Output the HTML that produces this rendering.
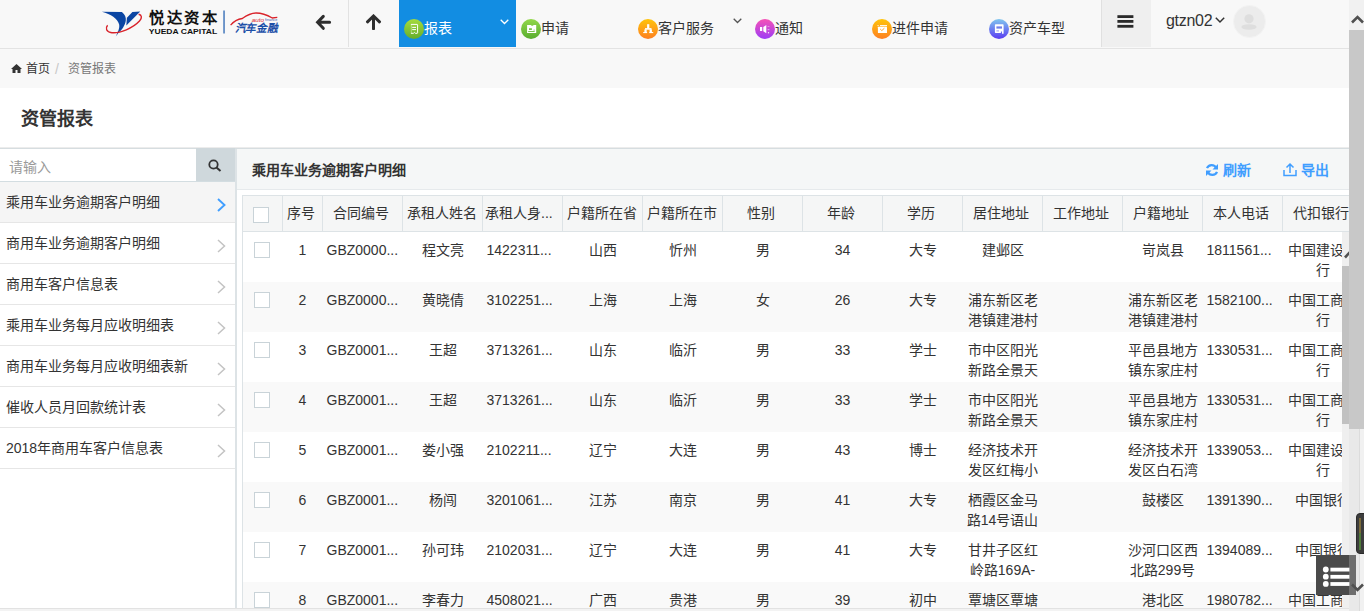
<!DOCTYPE html>
<html lang="zh-CN">
<head>
<meta charset="utf-8">
<style>
*{box-sizing:border-box;margin:0;padding:0}
html,body{width:1364px;height:611px;overflow:hidden;background:#fff}
body{font-family:"Liberation Sans",sans-serif;font-size:14px;color:#333;position:relative}
.abs{position:absolute}
/* header */
#hdr{position:absolute;left:0;top:0;width:1349px;height:49px;background:#f8f8f8;border-bottom:1px solid #e3e3e3}
.vline{position:absolute;top:0;width:1px;height:47px;background:#e2e2e2}
.menu{position:absolute;top:0;height:47px;width:117px}
.menu.act{background:#128de2}
.menu .ic{position:absolute;left:5px;top:19px;width:20px;height:20px;border-radius:50%}
.menu .tx{position:absolute;left:25px;top:18px;font-size:14px;line-height:20px;color:#333;white-space:nowrap}
.menu.act .tx{color:#fff}
.chev{position:absolute}
/* breadcrumb */
#bc{position:absolute;left:0;top:49px;width:1349px;height:39px;background:#f8f8f8;font-size:12px}
#title{position:absolute;left:21px;top:107px;font-size:18px;font-weight:bold;color:#333;line-height:24px}
#topline{position:absolute;left:0;top:147px;width:1349px;height:2px;background:linear-gradient(#ececec 0,#ececec 1px,#d6dde0 1px)}
/* sidebar */
#side{position:absolute;left:0;top:149px;width:236px;height:459px;border-right:1px solid #dde3e6;background:#fff}
#search{position:absolute;left:0;top:0;width:235px;height:33px;border-bottom:1px solid #d3dde1}
#search .ph{position:absolute;left:9px;top:8px;color:#9a9a9a;font-size:14px;line-height:20px}
#search .btn{position:absolute;left:196px;top:-1px;width:39px;height:33px;background:#cfd8dc}
.item{position:absolute;left:0;width:235px;height:41px;border-bottom:1px solid #e6e6e6;background:#fff}
.item.act{background:#f5f5f5}
.item .t{position:absolute;left:6px;top:10px;line-height:20px;font-size:14px;color:#333;white-space:nowrap}
.item svg{position:absolute;left:216.5px;top:16px}
/* panel */
#panel{position:absolute;left:236px;top:149px;width:1113px;height:459px;border-left:1px solid #dde3e6;background:#fff}
#ph{position:absolute;left:0;top:0;width:1112px;height:41px;background:#f5f7f7;border-bottom:1px solid #e6eaec}
#ph .t{position:absolute;left:15px;top:11px;font-size:14px;font-weight:bold;line-height:20px;color:#333}
.lnk{position:absolute;top:11px;line-height:20px;color:#409eff;font-weight:bold;font-size:14px}
/* table */
#tbl{position:absolute;left:5px;top:46px;width:1200px;height:413px;overflow:hidden}
table{border-collapse:collapse;table-layout:fixed}
th,td{text-align:center;font-size:14px;font-weight:normal;padding:0 4px;overflow:hidden;white-space:nowrap;text-overflow:clip}
thead th{height:36px;padding:0 8px 2px 4px;background:#f5f6f6;border:1px solid #dde3e6;border-top:1px solid #dde3e6;line-height:20px;color:#333}
tbody td{height:50px;vertical-align:top;padding-top:8px;line-height:20px;color:#333}
tbody tr:nth-child(even) td{background:#f9f9f9}
td.l{text-align:left}
tbody td:first-child{border-left:1px solid #dde3e6}
td.w{white-space:normal;text-overflow:clip}
td.w div{max-height:40px;overflow:hidden;word-break:break-all}
thead .cb{position:relative;top:4px}
tbody .cb{position:relative;left:-1px;top:2px}
.cb{display:inline-block;width:16px;height:16px;border:1px solid #c9d3d8;background:#fff;vertical-align:top}

/* scrollbars */
#isb{position:absolute;left:1342px;top:232px;width:7px;height:376px;background:#efefef}
#isb .th{position:absolute;left:0;top:34px;width:7px;height:158px;background:#c1c1c1}
#psb{position:absolute;left:1349px;top:0;width:15px;height:611px;background:linear-gradient(90deg,#e9e9e9 0,#e9e9e9 10px,#dcdcdc 10px,#dcdcdc 11px,#f1f1f1 11px)}
#psb .th{position:absolute;left:0;top:30px;width:15px;height:399px;background:#c8c8c8}
#bot{position:absolute;left:0;top:608px;width:1349px;height:3px;background:#f3f3f3;border-top:1px solid #e2e2e2}
</style>
</head>
<body>

<div id="hdr">
  <!-- logo -->
  <svg class="abs" style="left:100px;top:9px" width="182" height="30" viewBox="0 0 182 30">
    <path d="M1.9 2.8 L21.9 3.1 C25 5.5 26.2 8.5 25.8 11.5 C25.2 16 22 21 19.1 23.1 L15.8 27.6 L17.6 23.5 C19.3 20 19.6 17.5 19.1 15.3 C17.5 10 11 5 1.9 2.8 Z" fill="#0a45a3"/>
    <path d="M26.9 8.7 L32.4 3.1 L40.2 2.6 L26.3 16.4 Z" fill="#0a45a3"/>
    <path d="M7.6 16.2 C5.2 19 6 23 11.9 23.7 C20 24.5 33 19 39.5 12 C42.3 9 42 6 38.6 5.3" stroke="#d9232b" stroke-width="1.4" fill="none"/>
    <text x="48.8" y="14.3" font-size="15.3" font-weight="bold" fill="#111" textLength="68.3" lengthAdjust="spacing">悦达资本</text>
    <text x="48.8" y="24.6" font-size="7.6" font-weight="bold" fill="#111" textLength="68.3" lengthAdjust="spacingAndGlyphs">YUEDA CAPITAL</text>
    <rect x="123.1" y="1.5" width="1.9" height="23" fill="#6a93c8"/>
    <path d="M130.6 16.2 C134 12 138 10 142.3 9.5 C147 6 151 4 156.2 4 C162 4 167 6 172.3 9 L177.3 8.4" stroke="#d9232b" stroke-width="1.3" fill="none"/>
    <text x="151.7" y="12.6" font-size="4.6" font-style="italic" fill="#d9232b" textLength="12.3" lengthAdjust="spacingAndGlyphs">auto</text>
    <text x="165" y="12.4" font-size="3.4" fill="#3a63b0" textLength="12.3" lengthAdjust="spacingAndGlyphs">finance</text>
    <text x="134.7" y="23" font-size="11" font-weight="bold" font-style="italic" fill="#1b4fa8" textLength="42.6" lengthAdjust="spacingAndGlyphs">汽车金融</text>
  </svg>
  <!-- back arrow -->
  <svg class="abs" style="left:315px;top:14px" width="17" height="17" viewBox="0 0 17 17">
    <path d="M8.3 2.4 L2.6 8.3 L8.3 14.3 M3.2 8.3 L14.6 8.3" stroke="#2e2e2e" stroke-width="3" fill="none" stroke-linecap="round" stroke-linejoin="miter"/>
  </svg>
  <div class="vline" style="left:348px"></div>
  <!-- up arrow -->
  <svg class="abs" style="left:365px;top:14px" width="17" height="16" viewBox="0 0 17 16">
    <path d="M2.5 7.8 L8.5 2 L14.5 7.8 M8.5 3 L8.5 14.8" stroke="#2e2e2e" stroke-width="3" fill="none" stroke-linecap="round"/>
  </svg>

  <div class="menu act" style="left:399px">
    <svg class="abs" style="left:5px;top:19px" width="20" height="20"><defs><linearGradient id="g1" x1="0" y1="0" x2="0" y2="1"><stop offset="0" stop-color="#a6dc3c"/><stop offset="1" stop-color="#64ad2c"/></linearGradient></defs><circle cx="10" cy="10" r="10" fill="url(#g1)"/><path d="M6.9 5.4 H13 Q13.6 5.4 13.6 6 V13.8 Q13.6 14.3 13 14.3 H11.4 L10.4 13.4 L9.4 14.3 H6.9" stroke="#fff" stroke-width="1" fill="none"/><path d="M7.3 5.6 V14" stroke="#fff" stroke-opacity=".45" stroke-width=".8"/><path d="M8.2 8.4 H12 M8.2 10.6 H12" stroke="#fff" stroke-width="1"/></svg>
    <div class="tx">报表</div>
    <svg class="chev" style="left:101px;top:19px" width="9" height="6"><path d="M0.7 0.7 L4.5 4.5 L8.3 0.7" stroke="#fff" stroke-width="1.3" fill="none"/></svg>
  </div>
  <div class="menu" style="left:516px">
    <svg class="abs" style="left:5px;top:19px" width="20" height="20"><defs><linearGradient id="g2" x1="0" y1="0" x2="0" y2="1"><stop offset="0" stop-color="#92d84a"/><stop offset="1" stop-color="#58ad2e"/></linearGradient></defs><circle cx="10" cy="10" r="10" fill="url(#g2)"/><path d="M6.1 6.1 H10 L10.5 6.8 L12 6.8 L12.6 6.1 H15.2 V14.1 H6.1 Z" fill="#fff"/><rect x="8" y="9.3" width="2.9" height="1.6" fill="#6cbd3a"/><rect x="7.2" y="12" width="6.5" height=".9" fill="#6cbd3a"/><rect x="12.6" y="10.6" width="1" height="1" fill="#6cbd3a"/></svg>
    <div class="tx">申请</div>
  </div>
  <div class="menu" style="left:633px">
    <svg class="abs" style="left:5px;top:19px" width="20" height="20"><defs><linearGradient id="g3" x1="0" y1="0" x2="0" y2="1"><stop offset="0" stop-color="#ffc40a"/><stop offset="1" stop-color="#fd7f22"/></linearGradient></defs><circle cx="10" cy="10" r="10" fill="url(#g3)"/><rect x="9.1" y="5.2" width="2.2" height="4.4" fill="#fff"/><rect x="7" y="9.1" width="6.5" height="1.6" fill="#fff"/><rect x="6.4" y="10.4" width="2.3" height="3.6" fill="#fff"/><rect x="11.6" y="10.4" width="2.3" height="3.6" fill="#fff"/><rect x="5.2" y="13" width="3.9" height="1.1" fill="#fff"/><rect x="11.3" y="13" width="3.9" height="1.1" fill="#fff"/></svg>
    <div class="tx">客户服务</div>
    <svg class="chev" style="left:100px;top:18px" width="9" height="6"><path d="M0.7 0.7 L4.5 4.5 L8.3 0.7" stroke="#555" stroke-width="1.3" fill="none"/></svg>
  </div>
  <div class="menu" style="left:750px">
    <svg class="abs" style="left:5px;top:19px" width="20" height="20"><defs><linearGradient id="g4" x1="0" y1="0" x2="0" y2="1"><stop offset="0" stop-color="#f652b6"/><stop offset="1" stop-color="#9d3cf6"/></linearGradient></defs><circle cx="10" cy="10" r="10" fill="url(#g4)"/><rect x="5" y="8" width="2.2" height="4" fill="#fff"/><path d="M8.3 8 L11.3 5.9 V14.3 L8.3 12.2 Z" fill="#fff"/><rect x="12.6" y="7.2" width="1.8" height=".7" fill="#fff" fill-opacity=".6"/><rect x="12.6" y="10.4" width="1.8" height=".7" fill="#fff" fill-opacity=".8"/><rect x="12.9" y="13.2" width="1.2" height="1.1" fill="#fff"/></svg>
    <div class="tx">通知</div>
  </div>
  <div class="menu" style="left:867px">
    <svg class="abs" style="left:5px;top:19px" width="20" height="20"><defs><linearGradient id="g5" x1="0" y1="0" x2="0" y2="1"><stop offset="0" stop-color="#ffc40a"/><stop offset="1" stop-color="#fd7f22"/></linearGradient></defs><circle cx="10" cy="10" r="10" fill="url(#g5)"/><rect x="5.3" y="6.1" width="1.5" height="1" fill="#fff" fill-opacity=".7"/><rect x="8" y="6.1" width="7" height="1.1" fill="#fff"/><rect x="5.9" y="7.8" width="9.1" height="6.3" rx=".5" fill="#fff"/><path d="M8.2 10 L9.8 11.6 L12.4 9.2" stroke="#fd9a1c" stroke-width=".9" fill="none"/></svg>
    <div class="tx">进件申请</div>
  </div>
  <div class="menu" style="left:984px">
    <svg class="abs" style="left:5px;top:19px" width="20" height="20"><defs><linearGradient id="g6" x1="0" y1="0" x2="0" y2="1"><stop offset="0" stop-color="#80c6ee"/><stop offset="1" stop-color="#5a3cf2"/></linearGradient></defs><circle cx="10" cy="10" r="10" fill="url(#g6)"/><path d="M6.6 5.2 H13.9 Q14.6 5.2 14.6 5.9 V14.8 H13 V12.6 H11.9 V14 H6.6 Q5.9 14 5.9 13.3 V5.9 Q5.9 5.2 6.6 5.2 Z" fill="#fff"/><rect x="7.4" y="7.4" width="5.6" height="2.2" fill="#6f7ee8"/><rect x="7.4" y="11.3" width="2.6" height="1.2" fill="#aab0ee"/></svg>
    <div class="tx">资产车型</div>
  </div>

  <div class="abs" style="left:1101px;top:0;width:50px;height:47px;background:#efefef;border-left:1px solid #e0e0e0"></div>
  <svg class="abs" style="left:1117px;top:15px" width="17" height="14"><rect x="0.4" y="0.2" width="16" height="2.8" fill="#2a2a2a"/><rect x="0.4" y="5" width="16" height="2.8" fill="#2a2a2a"/><rect x="0.4" y="9.9" width="16" height="2.8" fill="#2a2a2a"/></svg>
  <div class="abs" style="left:1166px;top:11px;font-size:16px;letter-spacing:-0.3px;line-height:20px;color:#333">gtzn02</div>
  <svg class="abs" style="left:1215px;top:17px" width="10" height="7"><path d="M0.8 0.8 L5 5 L9.2 0.8" stroke="#333" stroke-width="1.5" fill="none"/></svg>
  <div class="abs" style="left:1233px;top:5px;width:33px;height:33px;border-radius:50%;background:#ececec;border:1px solid #f3f3f3"></div>
  <svg class="abs" style="left:1239px;top:12px" width="20" height="20"><circle cx="10" cy="6.8" r="4.6" fill="#dedede"/><ellipse cx="10" cy="15" rx="7.6" ry="2.7" fill="#dedede"/></svg>
</div>

<div id="bc">
  <svg class="abs" style="left:11px;top:15px" width="11" height="9" viewBox="0 0 11 9"><path d="M5.5 0 L11 5 L9.5 5 L9.5 9 L6.5 9 L6.5 6 L4.5 6 L4.5 9 L1.5 9 L1.5 5 L0 5 Z" fill="#333"/></svg>
  <div class="abs" style="left:26px;top:12px;line-height:16px;color:#333">首页</div>
  <div class="abs" style="left:55px;top:11px;line-height:18px;font-size:14px;color:#c8c8c8">/</div>
  <div class="abs" style="left:68px;top:12px;line-height:16px;color:#777">资管报表</div>
</div>

<div id="title">资管报表</div>
<div id="topline"></div>

<div id="side">
  <div id="search">
    <div class="ph">请输入</div>
    <div class="btn">
      <svg class="abs" style="left:12px;top:11px" width="14" height="13"><circle cx="5.5" cy="5.5" r="4.2" stroke="#333" stroke-width="1.8" fill="none"/><path d="M8.5 8.5 L12.5 12" stroke="#333" stroke-width="2"/></svg>
    </div>
  </div>
  <div class="item act" style="top:33px"><div class="t">乘用车业务逾期客户明细</div><svg width="9" height="14"><path d="M1 1 L7.5 7 L1 13" stroke="#409eff" stroke-width="1.9" fill="none"/></svg></div>
  <div class="item" style="top:74px"><div class="t">商用车业务逾期客户明细</div><svg width="9" height="14"><path d="M1 1 L7.5 7 L1 13" stroke="#c3c3c3" stroke-width="1.5" fill="none"/></svg></div>
  <div class="item" style="top:115px"><div class="t">商用车客户信息表</div><svg width="9" height="14"><path d="M1 1 L7.5 7 L1 13" stroke="#c3c3c3" stroke-width="1.5" fill="none"/></svg></div>
  <div class="item" style="top:156px"><div class="t">乘用车业务每月应收明细表</div><svg width="9" height="14"><path d="M1 1 L7.5 7 L1 13" stroke="#c3c3c3" stroke-width="1.5" fill="none"/></svg></div>
  <div class="item" style="top:197px"><div class="t">商用车业务每月应收明细表新</div><svg width="9" height="14"><path d="M1 1 L7.5 7 L1 13" stroke="#c3c3c3" stroke-width="1.5" fill="none"/></svg></div>
  <div class="item" style="top:238px"><div class="t">催收人员月回款统计表</div><svg width="9" height="14"><path d="M1 1 L7.5 7 L1 13" stroke="#c3c3c3" stroke-width="1.5" fill="none"/></svg></div>
  <div class="item" style="top:279px"><div class="t">2018年商用车客户信息表</div><svg width="9" height="14"><path d="M1 1 L7.5 7 L1 13" stroke="#c3c3c3" stroke-width="1.5" fill="none"/></svg></div>
</div>

<div id="panel">
  <div id="ph">
    <div class="t">乘用车业务逾期客户明细</div>
    <svg class="abs" style="left:968px;top:14px" width="14" height="14"><path d="M11.2 5 A5 5 0 0 0 2 5.2" stroke="#409eff" stroke-width="2.2" fill="none"/><path d="M2.8 9 A5 5 0 0 0 12 8.8" stroke="#409eff" stroke-width="2.2" fill="none"/><path d="M13 1v5.5H7.5z" fill="#409eff"/><path d="M1 13V7.5h5.5z" fill="#409eff"/></svg>
    <div class="lnk" style="left:986px">刷新</div>
    <svg class="abs" style="left:1046px;top:13px" width="14" height="15"><path d="M1 8v5.5h12V8" stroke="#409eff" stroke-width="1.5" fill="none"/><path d="M7 11V2 M3.5 5.5 L7 2 L10.5 5.5" stroke="#409eff" stroke-width="1.5" fill="none"/></svg>
    <div class="lnk" style="left:1064px">导出</div>
  </div>
  <div id="tbl">
  <table style="width:1120px"><colgroup><col style="width:40px"><col style="width:40px"><col style="width:80px"><col style="width:80px"><col style="width:80px"><col style="width:80px"><col style="width:80px"><col style="width:80px"><col style="width:80px"><col style="width:80px"><col style="width:80px"><col style="width:80px"><col style="width:80px"><col style="width:80px"><col style="width:80px"></colgroup>
    <thead><tr>
      <th class="c"><span class="cb"></span></th><th class="c">序号</th><th>合同编号</th><th>承租人姓名</th><th style="text-align:left;padding-left:2px">承租人身...</th><th>户籍所在省</th><th>户籍所在市</th><th>性别</th><th>年龄</th><th>学历</th><th>居住地址</th><th>工作地址</th><th>户籍地址</th><th>本人电话</th><th>代扣银行</th>
    </tr></thead>
    <tbody>
<tr><td class="c"><span class="cb"></span></td><td class="c">1</td><td class="l">GBZ0000...</td><td>程文亮</td><td class="l">1422311...</td><td>山西</td><td>忻州</td><td>男</td><td>34</td><td>大专</td><td class="w"><div>建邺区</div></td><td class="w"><div></div></td><td class="w"><div>岢岚县</div></td><td class="l">1811561...</td><td class="w"><div>中国建设银行</div></td></tr>
<tr><td class="c"><span class="cb"></span></td><td class="c">2</td><td class="l">GBZ0000...</td><td>黄晓倩</td><td class="l">3102251...</td><td>上海</td><td>上海</td><td>女</td><td>26</td><td>大专</td><td class="w"><div>浦东新区老港镇建港村</div></td><td class="w"><div></div></td><td class="w"><div>浦东新区老港镇建港村</div></td><td class="l">1582100...</td><td class="w"><div>中国工商银行</div></td></tr>
<tr><td class="c"><span class="cb"></span></td><td class="c">3</td><td class="l">GBZ0001...</td><td>王超</td><td class="l">3713261...</td><td>山东</td><td>临沂</td><td>男</td><td>33</td><td>学士</td><td class="w"><div>市中区阳光新路全景天城</div></td><td class="w"><div></div></td><td class="w"><div>平邑县地方镇东家庄村</div></td><td class="l">1330531...</td><td class="w"><div>中国工商银行</div></td></tr>
<tr><td class="c"><span class="cb"></span></td><td class="c">4</td><td class="l">GBZ0001...</td><td>王超</td><td class="l">3713261...</td><td>山东</td><td>临沂</td><td>男</td><td>33</td><td>学士</td><td class="w"><div>市中区阳光新路全景天城</div></td><td class="w"><div></div></td><td class="w"><div>平邑县地方镇东家庄村</div></td><td class="l">1330531...</td><td class="w"><div>中国工商银行</div></td></tr>
<tr><td class="c"><span class="cb"></span></td><td class="c">5</td><td class="l">GBZ0001...</td><td>娄小强</td><td class="l">2102211...</td><td>辽宁</td><td>大连</td><td>男</td><td>43</td><td>博士</td><td class="w"><div>经济技术开发区红梅小区</div></td><td class="w"><div></div></td><td class="w"><div>经济技术开发区白石湾村</div></td><td class="l">1339053...</td><td class="w"><div>中国建设银行</div></td></tr>
<tr><td class="c"><span class="cb"></span></td><td class="c">6</td><td class="l">GBZ0001...</td><td>杨闯</td><td class="l">3201061...</td><td>江苏</td><td>南京</td><td>男</td><td>41</td><td>大专</td><td class="w"><div>栖霞区金马路14号语山花园</div></td><td class="w"><div></div></td><td class="w"><div>鼓楼区</div></td><td class="l">1391390...</td><td class="w"><div>中国银行</div></td></tr>
<tr><td class="c"><span class="cb"></span></td><td class="c">7</td><td class="l">GBZ0001...</td><td>孙可玮</td><td class="l">2102031...</td><td>辽宁</td><td>大连</td><td>男</td><td>41</td><td>大专</td><td class="w"><div>甘井子区红岭路169A-1号</div></td><td class="w"><div></div></td><td class="w"><div>沙河口区西北路299号</div></td><td class="l">1394089...</td><td class="w"><div>中国银行</div></td></tr>
<tr><td class="c"><span class="cb"></span></td><td class="c">8</td><td class="l">GBZ0001...</td><td>李春力</td><td class="l">4508021...</td><td>广西</td><td>贵港</td><td>男</td><td>39</td><td>初中</td><td class="w"><div>覃塘区覃塘镇</div></td><td class="w"><div></div></td><td class="w"><div>港北区</div></td><td class="l">1980782...</td><td class="w"><div>中国工商银行</div></td></tr>
</tbody>
  </table>
  </div>
</div>

<div id="isb"><div class="th"></div><svg class="abs" style="left:0;top:16px" width="7" height="12"><path d="M3 9.5 L8.5 3.5" stroke="#505050" stroke-width="2.6" fill="none"/></svg></div>
<div id="bot"></div>
<div id="psb"><div class="abs" style="left:0;top:0;width:15px;height:30px;background:#f1f1f1"></div><div class="th"></div>
  <svg class="abs" style="left:2px;top:14px" width="13" height="10"><path d="M1 8.5 L6.5 3 L12 8.5" stroke="#505050" stroke-width="2.6" fill="none"/></svg>
</div>


<div class="abs" style="left:1356px;top:513px;width:10px;height:41px;background:#3c3c3c;border-radius:4px 0 0 4px;border:1px solid #2a2a2a"></div>
<div class="abs" style="left:1359px;top:518px;width:2px;height:15px;background:#7a6a3a"></div>
<div class="abs" style="left:1359px;top:533px;width:2px;height:17px;background:#4f7a3a"></div>
<div class="abs" style="left:1316px;top:555px;width:40px;height:40px;background:#4a4a4a"></div>
<div class="abs" style="left:1349px;top:555px;width:7px;height:40px;background:#6e6e6e"></div>
<svg class="abs" style="left:1320px;top:565px" width="32" height="24"><circle cx="5.8" cy="4.5" r="2.9" fill="#fff"/><circle cx="5.8" cy="11.7" r="2.9" fill="#fff"/><circle cx="5.8" cy="18.9" r="2.9" fill="#fff"/><rect x="10.4" y="2.7" width="19" height="3.8" fill="#fff"/><rect x="10.4" y="9.9" width="19" height="3.8" fill="#fff"/><rect x="10.4" y="17.1" width="19" height="3.8" fill="#fff"/></svg>
<svg class="abs" style="left:1351px;top:583px" width="13" height="10"><path d="M1 1.5 L6.5 7 L12 1.5" stroke="#505050" stroke-width="2.6" fill="none"/></svg>
</body>
</html>
